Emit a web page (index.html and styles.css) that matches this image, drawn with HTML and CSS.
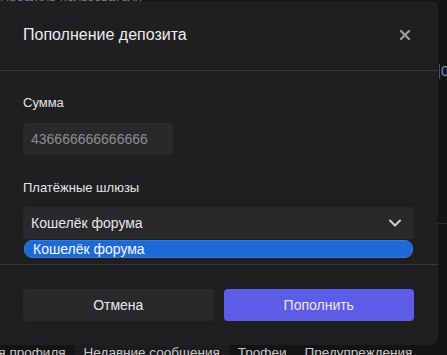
FILE: index.html
```html
<!DOCTYPE html>
<html lang="ru">
<head>
    <meta charset="UTF-8">
    <meta name="viewport" content="width=device-width, initial-scale=1.0">
    <title>Пополнение депозита</title>
    <link rel="stylesheet" href="styles.css">
</head>
<body>
    <div class="page">
        <div class="page-top">Профиль пользователя</div>
        <div class="side-stat">0</div>
        <div class="side-line"></div>
        <div class="tabs">
            <span class="tab">Информация профиля</span>
            <span class="tab tab-active">Недавние сообщения</span>
            <span class="tab">Трофеи</span>
            <span class="tab">Предупреждения</span>
        </div>
    </div>

    <div class="overlay">
        <div class="modal">
            <div class="modal-header">
                <span class="modal-title">Пополнение депозита</span>
                <span class="modal-close">
                    <svg width="12" height="12" viewBox="0 0 12 12">
                        <path d="M2 2L10 10M10 2L2 10" stroke="#9a9a9c" stroke-width="2.4" stroke-linecap="round"/>
                    </svg>
                </span>
            </div>
            <div class="modal-body">
                <div class="field-label">Сумма</div>
                <input class="input" type="text" value="436666666666666">
                <div class="field-label second">Платёжные шлюзы</div>
                <div class="select">
                    <span>Кошелёк форума</span>
                    <svg width="14" height="10" viewBox="0 0 14 10">
                        <path d="M2 2.5L7 7.5L12 2.5" fill="none" stroke="#cfcfd1" stroke-width="2" stroke-linecap="round" stroke-linejoin="round"/>
                    </svg>
                </div>
                <div class="option">Кошелёк форума</div>
            </div>
            <div class="modal-footer">
                <button class="btn btn-cancel">Отмена</button>
                <button class="btn btn-primary">Пополнить</button>
            </div>
        </div>
    </div>
</body>
</html>
```

FILE: styles.css
```css
html {
    overflow: hidden;
}
body {
    margin: 0;
    background-color: #141415;
    font-family: 'Liberation Sans', Arial, sans-serif;
    color: #e2e2e4;
    height: 355px;
    overflow: hidden;
    position: relative;
}
.page {
    height: 355px;
}
.page-top {
    position: absolute;
    top: -11px;
    left: 0;
    font-size: 13px;
    color: #7d7f88;
    white-space: nowrap;
}
.side-stat {
    position: absolute;
    top: 64px;
    left: 439px;
    font-size: 14px;
    color: #6f8fc0;
    border-left: 1px solid #555;
    padding-left: 1px;
    line-height: 15px;
}
.side-line {
    position: absolute;
    top: 223px;
    left: 438px;
    width: 20px;
    height: 1px;
    background-color: #2c2c2e;
}
.tabs {
    position: absolute;
    top: 340px;
    left: -86px;
    display: flex;
    font-size: 13.5px;
    color: #c8c8ca;
    white-space: nowrap;
}
.tab {
    padding: 3px 9px;
    line-height: 20px;
}
.tab-active {
    background-color: #1c1c1e;
}
.overlay {
    position: absolute;
    top: 1px;
    left: 0;
}
.modal {
    width: 438px;
    height: 344px;
    background-color: #1f1f21;
    border-radius: 0 7px 7px 0;
    display: flex;
    flex-direction: column;
}
.modal-header {
    height: 70px;
    padding: 0 24px 0 23px;
    display: flex;
    align-items: center;
    justify-content: space-between;
    border-bottom: 1px solid #38383a;
}
.modal-title {
    font-size: 16px;
    color: #ececee;
    padding-bottom: 2px;
}
.modal-close {
    display: flex;
    margin-right: 3px;
    padding-bottom: 2px;
}
.modal-body {
    padding: 22px 24px 6px 23px;
    border-bottom: 1px solid #38383a;
}
.field-label {
    font-size: 13px;
    line-height: 20px;
    margin-bottom: 10px;
    color: #e4e4e6;
}
.field-label.second {
    margin-top: 23px;
    margin-bottom: 9px;
}
.input {
    display: block;
    box-sizing: border-box;
    width: 150px;
    height: 32px;
    padding: 0 8px;
    background-color: #29292b;
    border: none;
    border-radius: 4px;
    font-family: inherit;
    font-size: 14px;
    color: #8d8d91;
    outline: none;
}
.select {
    box-sizing: border-box;
    height: 32px;
    padding: 0 12px 0 8px;
    background-color: #29292b;
    border-radius: 4px;
    display: flex;
    align-items: center;
    justify-content: space-between;
    font-size: 14px;
    color: #e6e6e8;
}
.option {
    box-sizing: border-box;
    height: 18px;
    margin: 1px 1px 0 1px;
    padding: 0 8px;
    background-color: #1d6ad7;
    border: 1px solid #3a78d0;
    border-radius: 8px;
    font-size: 14px;
    line-height: 16px;
    color: #f4f6fa;
}
.modal-footer {
    padding: 24px 24px 24px 23px;
    display: flex;
    gap: 10px;
}
.btn {
    flex: 1;
    height: 32px;
    border: none;
    border-radius: 4px;
    font-family: inherit;
    font-size: 14px;
    color: #e8e8ea;
}
.btn-cancel {
    background-color: #29292b;
}
.btn-primary {
    background-color: #5d5ce6;
}
```
